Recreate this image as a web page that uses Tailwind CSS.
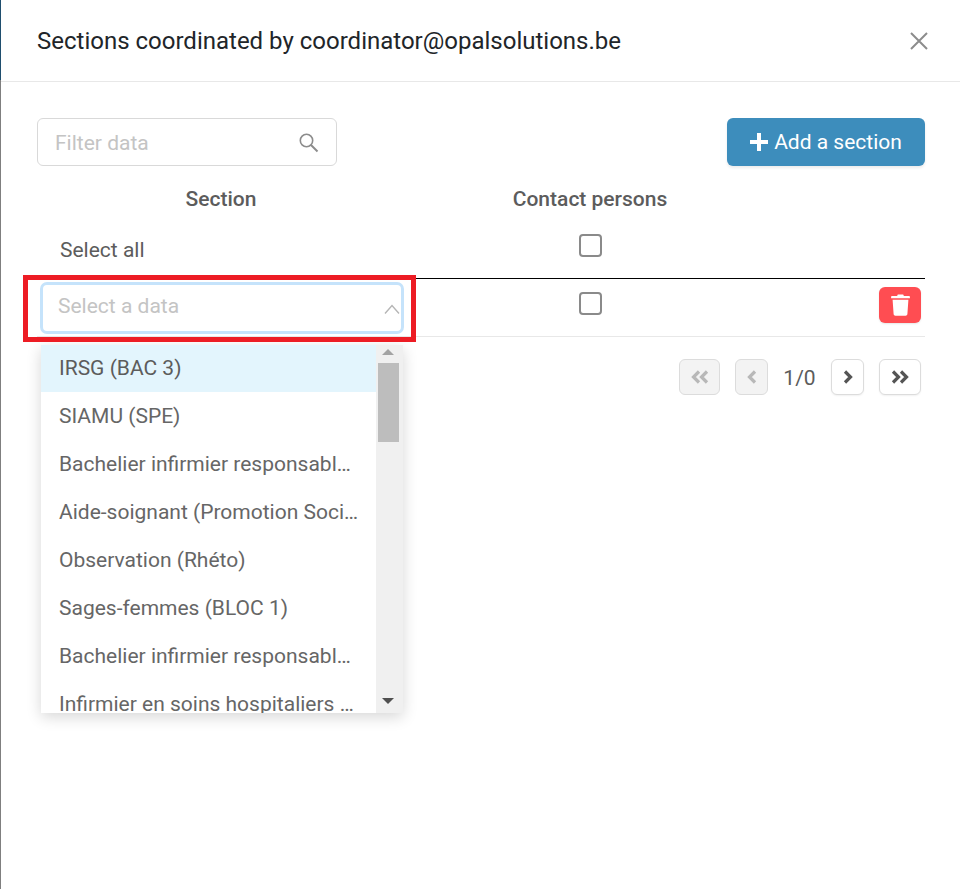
<!DOCTYPE html>
<html lang="en">
<head>
  <meta charset="UTF-8" />
  <title>Sections</title>
  <script src="https://cdn.jsdelivr.net/npm/@tailwindcss/browser@4"></script>
</head>
<body class="bg-white font-['Roboto',sans-serif] text-[#5c5c5c]">
<div class="relative w-[960px] h-[889px] overflow-hidden">

  <!-- bord de la page derrière la modale -->
  <div class="absolute left-0 top-0 w-px h-[889px] bg-[#7f7f7f]">
    <div class="w-px h-[80px] bg-[#1f4e6e]"></div>
  </div>

  <!-- Header -->
  <header class="h-[82px] border-b border-[#e8e8e8] pl-[37px] pr-[31px] flex items-center justify-between">
    <h1 class="text-[24px] text-[#212529] leading-none">Sections coordinated by coordinator@opalsolutions.be</h1>
    <svg class="w-[20px] h-[20px] text-[#8c8c8c]" viewBox="0 0 20 20" fill="none" stroke="currentColor" stroke-width="2"><path d="M2 2l16 16M18 2L2 18"/></svg>
  </header>

  <main class="px-[35px] pl-[37px] pt-[36px]">
    <!-- Toolbar -->
    <div class="flex justify-between items-start">
      <div class="w-[300px] h-[48px] border border-[#d9d9d9] rounded-[6px] pl-[17px] pr-[17px] flex items-center justify-between">
        <span class="text-[21px] text-[#c4c4c4] pt-[4px]">Filter data</span>
        <svg class="w-[21px] h-[21px] text-[#8c8c8c]" viewBox="0 0 21 21" fill="none" stroke="currentColor" stroke-width="1.6"><circle cx="8.5" cy="8.5" r="6.2"/><path d="M13 13l6.5 6.5" stroke-width="2"/></svg>
      </div>
      <button class="w-[198px] h-[48px] bg-[#3d8dbc] rounded-[6px] shadow-[0_2px_3px_rgba(0,0,0,0.08)] text-white text-[21px] flex items-center justify-center gap-[6px]">
        <svg class="w-[18px] h-[18px]" viewBox="0 0 18 18" fill="none" stroke="currentColor" stroke-width="4"><path d="M9 0v18M0 9h18"/></svg>
        <span class="pt-[2px]">Add a section</span>
      </button>
    </div>

    <!-- Table -->
    <div class="grid grid-cols-[368px_370px_150px] w-[888px] mt-[14px] h-[37px] items-center font-medium text-[21px]">
      <div class="text-center pt-[2px]">Section</div>
      <div class="text-center pt-[2px]">Contact persons</div>
      <div></div>
    </div>
    <div class="grid grid-cols-[368px_370px_150px] w-[888px] h-[62px] border-b border-black items-center pb-[2px]">
      <div class="pl-[23px] text-[21px] pt-[9px]">Select all</div>
      <div class="flex justify-center -mt-[2px]"><span class="w-[23px] h-[23px] border-2 border-[#8a8a8a] rounded-[4px]"></span></div>
      <div></div>
    </div>
    <div class="grid grid-cols-[368px_370px_150px] w-[888px] h-[58px] border-b border-[#e8e8e8] items-center">
      <div class="pl-[3px]">
        <div class="w-[364px] h-[52px] border-[3px] border-[#c5e3fb] rounded-[7px] pl-[15px] pr-[1px] flex items-center justify-between">
          <span class="text-[21px] text-[#c4c4c4] -mt-[2px]">Select a data</span>
          <svg class="w-[16px] h-[10px] text-[#b5b5b5] mt-[2px]" viewBox="0 0 16 10" fill="none" stroke="currentColor" stroke-width="1.4"><path d="M1 9.5L8 1.5l7 8"/></svg>
        </div>
      </div>
      <div class="flex justify-center -mt-[8px]"><span class="w-[23px] h-[23px] border-2 border-[#8a8a8a] rounded-[4px]"></span></div>
      <div class="flex justify-end pr-[4px] -mt-[6px]">
        <button class="w-[42px] h-[36px] bg-[#ff4d52] rounded-[6px] shadow-[0_1px_2px_rgba(0,0,0,0.1)] flex items-center justify-center">
          <svg class="w-[19px] h-[22px]" viewBox="0 0 19 22" fill="white"><path d="M6.8.5h5.4l.7 1.6h5c.5 0 1 .4 1 1v1.2H.1V3.100c0-.6.5-1 1-1h5zM1.600 5.700h15.800l-1 14.300c-.1 1-.9 1.700-1.800 1.700H4.400c-.9 0-1.700-.7-1.800-1.700z"/></svg>
        </button>
      </div>
    </div>

    <!-- Pagination -->
    <div class="w-[888px] flex justify-end items-center mt-[22px] pr-[4px]">
      <button class="w-[41px] h-[36px] bg-[#f3f3f3] border border-[#dcdcdc] rounded-[6px] flex items-center justify-center">
        <svg class="w-[18px] h-[14px] text-[#b8b8b8]" viewBox="0 0 18 14" fill="none" stroke="currentColor" stroke-width="3.200"><path d="M8 1.500L2.500 7 8 12.500M16 1.500L10.500 7l5.500 5.500"/></svg>
      </button>
      <button class="w-[33px] h-[36px] ml-[15px] bg-[#f3f3f3] border border-[#dcdcdc] rounded-[6px] flex items-center justify-center">
        <svg class="w-[10px] h-[14px] text-[#b8b8b8]" viewBox="0 0 10 14" fill="none" stroke="currentColor" stroke-width="3.200"><path d="M8 1.500L2.500 7 8 12.500"/></svg>
      </button>
      <span class="w-[63px] text-center text-[21px] leading-none pt-[2px]">1/0</span>
      <button class="w-[33px] h-[36px] bg-white border border-[#dcdcdc] rounded-[6px] shadow-[0_1px_2px_rgba(0,0,0,0.06)] flex items-center justify-center">
        <svg class="w-[10px] h-[14px] text-[#555]" viewBox="0 0 10 14" fill="none" stroke="currentColor" stroke-width="3.200"><path d="M2 1.500L7.500 7 2 12.500"/></svg>
      </button>
      <button class="w-[42px] h-[36px] ml-[15px] bg-white border border-[#dcdcdc] rounded-[6px] shadow-[0_1px_2px_rgba(0,0,0,0.06)] flex items-center justify-center">
        <svg class="w-[18px] h-[14px] text-[#555]" viewBox="0 0 18 14" fill="none" stroke="currentColor" stroke-width="3.200"><path d="M2 1.500L7.500 7 2 12.500M10 1.500L15.500 7 10 12.500"/></svg>
      </button>
    </div>
  </main>

  <!-- Dropdown -->
  <div class="absolute left-[41px] top-[345px] w-[362px] h-[368px] bg-white shadow-[0_4px_14px_rgba(0,0,0,0.16)] overflow-hidden flex">
    <ul class="w-[335px] text-[21px] text-[#666] whitespace-nowrap">
      <li class="h-[47px] bg-[#e3f5fd] text-[#5c5c5c] pl-[18px] flex items-center">IRSG (BAC 3)</li>
      <li class="h-[48px] pl-[18px] pt-[2px] flex items-center">SIAMU (SPE)</li>
      <li class="h-[48px] pl-[18px] pt-[2px] flex items-center">Bachelier infirmier responsabl…</li>
      <li class="h-[48px] pl-[18px] pt-[2px] flex items-center">Aide-soignant (Promotion Soci…</li>
      <li class="h-[48px] pl-[18px] pt-[2px] flex items-center">Observation (Rhéto)</li>
      <li class="h-[48px] pl-[18px] pt-[2px] flex items-center">Sages-femmes (BLOC 1)</li>
      <li class="h-[48px] pl-[18px] pt-[2px] flex items-center">Bachelier infirmier responsabl…</li>
      <li class="h-[48px] pl-[18px] pt-[2px] flex items-center">Infirmier en soins hospitaliers …</li>
    </ul>
    <div class="w-[27px] h-full bg-[#f0f0f0] flex flex-col items-center">
      <div class="w-full h-[18px] flex items-center justify-center pb-[4px]">
        <span class="w-0 h-0 border-x-[6px] border-x-transparent border-b-[6px] border-b-[#a3a3a3] -ml-[3px]"></span>
      </div>
      <div class="w-[21px] h-[79px] bg-[#bdbdbd] -ml-[3px]"></div>
      <div class="flex-1"></div>
      <div class="w-full h-[20px] flex items-center justify-center pb-[4px]">
        <span class="w-0 h-0 border-x-[6px] border-x-transparent border-t-[6px] border-t-[#505050] -ml-[3px]"></span>
      </div>
    </div>
  </div>

  <!-- Cadre rouge d'annotation -->
  <div class="absolute left-[23px] top-[275px] w-[393px] h-[67px] border-[5px] border-[#ed1c24] pointer-events-none"></div>
</div>
</body>
</html>
